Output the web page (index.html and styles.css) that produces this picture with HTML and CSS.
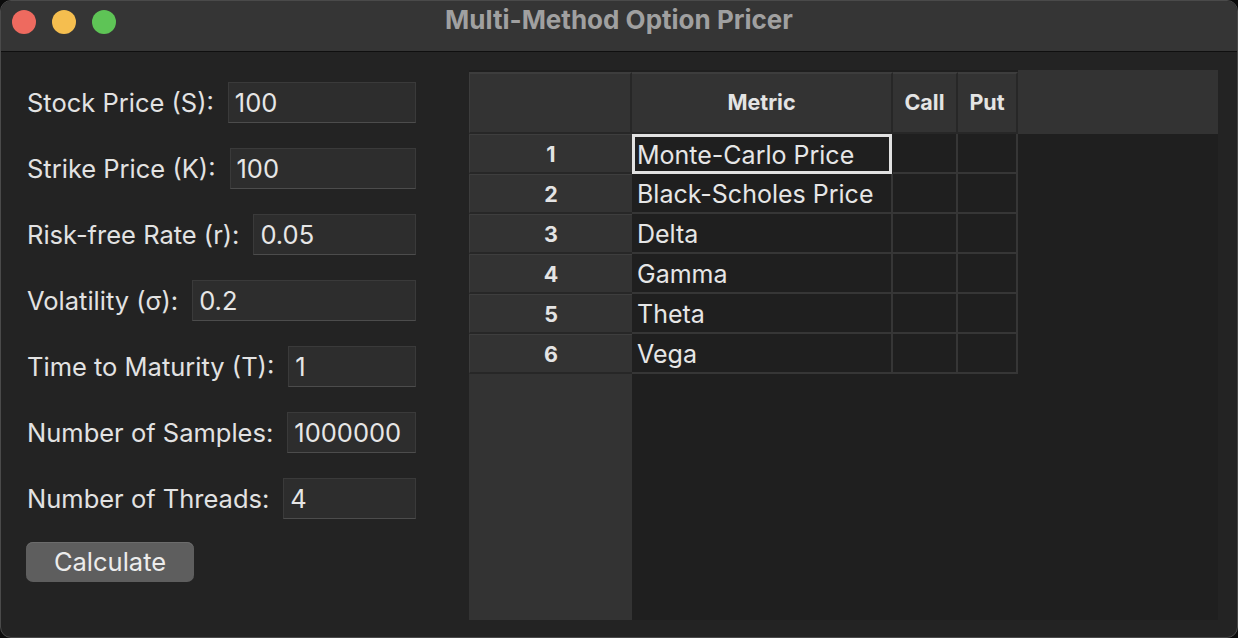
FILE: index.html
```html
<!DOCTYPE html>
<html>
<head>
<meta charset="utf-8">
<link rel="stylesheet" href="styles.css">
</head>
<body>
<div class="window">
  <div class="titlebar">
    <div class="lights">
      <span class="light red"></span>
      <span class="light yellow"></span>
      <span class="light green"></span>
    </div>
    <div class="title">Multi-Method Option Pricer</div>
  </div>
  <div class="content">
    <div class="form">
      <div class="row"><label>Stock Price (S):</label><div class="input">100</div></div>
      <div class="row"><label>Strike Price (K):</label><div class="input">100</div></div>
      <div class="row"><label>Risk-free Rate (r):</label><div class="input">0.05</div></div>
      <div class="row"><label>Volatility (σ):</label><div class="input">0.2</div></div>
      <div class="row"><label>Time to Maturity (T):</label><div class="input">1</div></div>
      <div class="row"><label>Number of Samples:</label><div class="input">1000000</div></div>
      <div class="row"><label>Number of Threads:</label><div class="input">4</div></div>
      <button class="btn">Calculate</button>
    </div>
    <div class="sheet">
      <div class="hcell idx"></div>
      <div class="hcell">Metric</div>
      <div class="hcell">Call</div>
      <div class="hcell">Put</div>
      <div class="hfill"></div>

      <div class="rnum">1</div><div class="cell sel">Monte-Carlo Price</div><div class="cell"></div><div class="cell"></div><div class="fill"></div>
      <div class="rnum">2</div><div class="cell">Black-Scholes Price</div><div class="cell"></div><div class="cell"></div><div class="fill"></div>
      <div class="rnum">3</div><div class="cell">Delta</div><div class="cell"></div><div class="cell"></div><div class="fill"></div>
      <div class="rnum">4</div><div class="cell">Gamma</div><div class="cell"></div><div class="cell"></div><div class="fill"></div>
      <div class="rnum">5</div><div class="cell">Theta</div><div class="cell"></div><div class="cell"></div><div class="fill"></div>
      <div class="rnum">6</div><div class="cell">Vega</div><div class="cell"></div><div class="cell"></div><div class="fill"></div>

      <div class="idxfill"></div>
    </div>
  </div>
</div>
</body>
</html>
```

FILE: styles.css
```css
* { box-sizing: border-box; }
html, body { margin: 0; padding: 0; background: #0b0b0b; }
body {
  width: 1238px;
  height: 638px;
  overflow: hidden;
  font-family: Inter, "Noto Sans", sans-serif;
}
.window {
  width: 1238px;
  height: 638px;
  background: #232323;
  border-radius: 11px;
  overflow: hidden;
  border: 1px solid #4a4a4a;
  display: flex;
  flex-direction: column;
}
.titlebar {
  height: 51px;
  flex: none;
  background: #353535;
  border-bottom: 1px solid #0f0f0f;
  position: relative;
  display: flex;
  align-items: center;
  justify-content: center;
}
.lights {
  position: absolute;
  left: 11px;
  top: 9px;
  display: flex;
  gap: 16px;
}
.light {
  width: 24px;
  height: 24px;
  border-radius: 50%;
  display: block;
}
.red { background: #ee6a5f; }
.yellow { background: #f5be4f; }
.green { background: #5ec456; }
.title {
  color: #a0a0a0;
  font-weight: 700;
  font-size: 26px;
  margin-top: -13px;
}
.content {
  flex: 1;
  display: flex;
  padding: 18px 20px 17px 25px;
  gap: 53px;
}
.form {
  width: 390px;
  flex: none;
  display: flex;
  flex-direction: column;
  gap: 25px;
  padding-top: 12px;
}
.row {
  display: flex;
  align-items: center;
  height: 41px;
  gap: 14px;
}
.row label {
  color: #e2e2e2;
  font-size: 25.5px;
  padding-left: 1px;
  white-space: nowrap;
}
.input {
  flex: 1;
  height: 41px;
  background: #2d2d2d;
  border: 1px solid #3a3a3a;
  border-bottom-color: #4c4c4c;
  color: #e6e6e6;
  font-size: 25.5px;
  padding-left: 6px;
  display: flex;
  align-items: center;
}
.btn {
  align-self: flex-start;
  margin-top: -2px;
  width: 168px;
  height: 40px;
  background: #5e5e5e;
  border: none;
  border-radius: 7px;
  color: #ececec;
  font-family: inherit;
  font-size: 25.5px;
  padding-bottom: 3px;
  box-shadow: 0 1px 0 #6c6c6c inset;
}
.sheet {
  flex: 1;
  display: grid;
  grid-template-columns: 163px 261px 65px 60px 1fr;
  grid-template-rows: 64px repeat(6, 40px) 1fr;
  background: #1f1f1f;
  margin-right: -1px;
}
.hcell {
  background: #333333;
  border-top: 2px solid #3d3d3d;
  border-right: 2px solid #272727;
  border-bottom: 2px solid #272727;
  margin-top: 2px;
  color: #e4e4e4;
  font-weight: 700;
  font-size: 21.5px;
  padding-bottom: 2px;
  display: flex;
  align-items: center;
  justify-content: center;
}
.hcell.idx { border-left: 1px solid #3d3d3d; }
.hfill { background: #333333; }
.rnum {
  background: #333333;
  border-top: 1px solid #3e3e3e;
  border-bottom: 2px solid #272727;
  border-left: 1px solid #3d3d3d;
  color: #e4e4e4;
  font-weight: 700;
  font-size: 21.5px;
  display: flex;
  align-items: center;
  justify-content: center;
}
.cell {
  border-right: 2px solid #363636;
  border-bottom: 2px solid #363636;
  color: #e6e6e6;
  font-size: 25px;
  padding-left: 5px;
  padding-top: 2px;
  display: flex;
  align-items: center;
  white-space: nowrap;
}
.cell.sel {
  border: 3px solid #e2e2e2;
  padding-left: 2px;
  margin-right: 1px;
}
.idxfill {
  grid-column: 1;
  background: #333333;
}
```
